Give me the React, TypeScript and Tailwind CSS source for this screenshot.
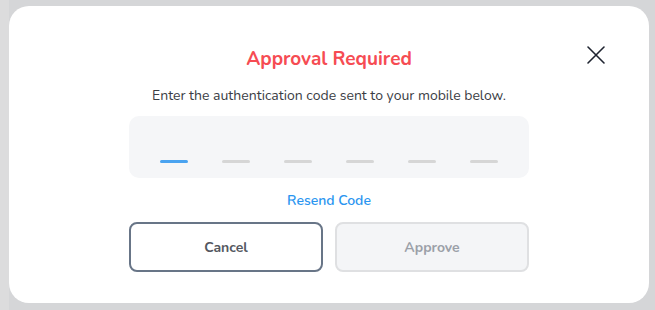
import React from 'react';

const slots = [0, 1, 2, 3, 4, 5];

export default function App() {
  return (
    <div
      className="relative h-[310px] w-[655px] overflow-hidden bg-[#d5d6d8]"
      style={{ fontFamily: 'Nunito, Lato, "Open Sans", sans-serif' }}
    >
      {/* blurred page behind the modal */}
      <div className="absolute inset-0 flex">
        <div className="w-[9px] bg-[#dcdcdd]" />
        <div className="flex-1" />
      </div>

      <div className="absolute left-[9px] top-[6px] flex h-[297px] w-[640px] flex-col items-center rounded-[20px] bg-white">
        <button className="absolute right-[42px] top-[38px] text-[#1f2430]">
          <svg width="22" height="22" viewBox="0 0 22 22" fill="none" stroke="currentColor" strokeWidth="1.6" strokeLinecap="round">
            <path d="M3 3L19 19M19 3L3 19" />
          </svg>
        </button>

        <h2 className="mt-[42px] text-[19px] font-bold leading-[22px] text-[#f64c53]">Approval Required</h2>
        <p className="mt-[17px] text-[14px] leading-[18px] text-[#3a3d44]">
          Enter the authentication code sent to your mobile below.
        </p>

        <div className="mt-[11px] flex h-[62px] w-[400px] items-end rounded-[10px] bg-[#f5f6f8] px-[14px] pb-[15px]">
          {slots.map((i) => (
            <div key={i} className="flex w-[62px] justify-center">
              <div className={`h-[3px] w-[28px] rounded-full ${i === 0 ? 'bg-[#4aa3f0]' : 'bg-[#d6d6d6]'}`} />
            </div>
          ))}
        </div>

        <button className="mt-[14px] text-[14px] font-semibold leading-[18px] text-[#2a95f0]">Resend Code</button>

        <div className="mt-[12px] flex gap-[12px]">
          <button className="h-[50px] w-[194px] rounded-[8px] border-2 border-[#687587] bg-white text-[14px] font-bold text-[#545860]">
            Cancel
          </button>
          <button className="h-[50px] w-[194px] rounded-[8px] border-2 border-[#dfe0e2] bg-[#f4f5f7] text-[14px] font-bold text-[#9ba0a8]">
            Approve
          </button>
        </div>
      </div>
    </div>
  );
}
